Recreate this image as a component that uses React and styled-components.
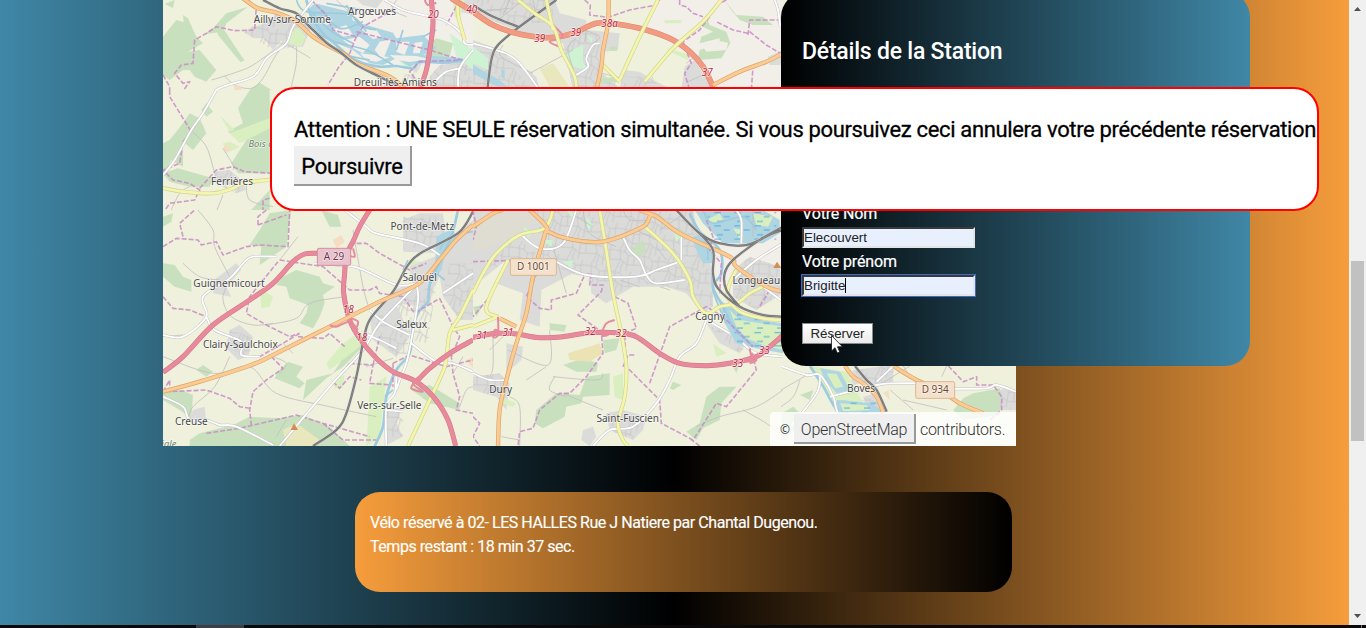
import React from "react";
import styled, { createGlobalStyle, css } from "styled-components";

const Global = createGlobalStyle`
  * { box-sizing: border-box; }
  body { margin: 0; overflow: hidden; font-family: Roboto, "Open Sans", sans-serif; }
`;

const Screen = styled.div`
  width: 1366px;
  height: 628px;
  display: grid;
  grid-template: 625px 3px / 1349px 17px;
`;

const Page = styled.main`
  position: relative;
  overflow: hidden;
  padding-left: 163px;
  background: linear-gradient(to right, #3f87a6, #000, #f69d3c);
`;

const MapRow = styled.section`
  display: flex;
  align-items: flex-start;
  height: 446px;
`;

const MapFrame = styled.div`
  display: grid;
  flex: 0 0 853px;
  height: 446px;
  overflow: hidden;
  & > * { grid-area: 1 / 1; }
`;

const MapSvg = styled.svg`
  display: block;
  background: #eff1dc;
`;

const Attribution = styled.div`
  align-self: end;
  justify-self: end;
  display: flex;
  align-items: center;
  width: 246px;
  height: 34px;
  padding-left: 10px;
  border-radius: 4px 0 0 0;
  background: rgba(255, 255, 255, 0.8);
  color: #333;
  font-size: 16px;
  font-weight: 300;
  letter-spacing: -0.3px;
  white-space: nowrap;
`;

const Copyright = styled.span`
  width: 14px;
  font: 12px "Noto Sans", sans-serif;
`;

const OsmButton = styled.button`
  width: 122px;
  height: 30px;
  margin-right: 4px;
  padding: 2px 0 0;
  border: 0 solid #999;
  border-width: 0 2px 2px 0;
  background: #efefef;
  color: #333;
  font: 300 16px Roboto, sans-serif;
  letter-spacing: -0.25px;
`;

const Details = styled.aside`
  position: relative;
  flex: 0 0 469px;
  height: 374px;
  margin: -8px 0 0 -235px;
  padding: 46px 21px 0;
  border-radius: 25px;
  background: linear-gradient(to right, #000, #3f87a6);
  color: #fff;
`;

const DetailsTitle = styled.h2`
  height: 28px;
  margin: 0 0 137px;
  font-size: 23px;
  font-weight: 500;
  line-height: 28px;
  letter-spacing: -0.22px;
  white-space: nowrap;
`;

const Field = styled.label`
  display: flex;
  flex-direction: column;
  align-items: flex-start;
  height: 48px;
  font-size: 16px;
  font-weight: 400;
  line-height: 21px;
  letter-spacing: -0.15px;
  -webkit-text-stroke: 0.2px #fff;
`;

const Input = styled.input`
  width: 173px;
  height: 21px;
  margin-top: 3px;
  padding: 1px 0;
  border: 2px inset #999;
  border-color: #8e8e8e #e4e4e4 #e4e4e4 #8e8e8e;
  border-radius: 0;
  background: #e8f0fe;
  color: #222;
  font: 13.33px "Liberation Sans", Arial, sans-serif;
  -webkit-text-stroke: 0;
  outline: ${(p) => (p.$focused ? "1px solid #3b6bc4" : "none")};
`;

const ReserveButton = styled.button`
  width: 71px;
  height: 21px;
  margin-top: 24px;
  padding: 0;
  border: 1px solid #8a8a8a;
  background: linear-gradient(#fff, #ebebeb);
  color: #222;
  font: 13.33px "Liberation Sans", Arial, sans-serif;
`;

const Caret = styled.i`
  position: absolute;
  left: 64px;
  top: 286px;
  width: 1px;
  height: 15px;
  background: #000;
`;

const Pointer = styled.svg`
  position: absolute;
  left: 50px;
  top: 343px;
`;

const Notice = styled.section`
  width: 657px;
  height: 100px;
  margin: 46px 0 0 192px;
  padding: 19px 15px;
  border-radius: 25px;
  background: linear-gradient(to right, #f69d3c, #000);
  color: #fff;
  font-size: 16px;
  line-height: 24px;
  white-space: nowrap;
`;

const NoticeLine = styled.p`
  margin: 0;
  letter-spacing: -0.45px;
  -webkit-text-stroke: 0.15px #fff;
`;

const Dialog = styled.div`
  position: absolute;
  left: 270px;
  top: 87px;
  width: 1049px;
  height: 124px;
  padding: 26px 0 0 22px;
  border: 2px solid #f00;
  border-radius: 25px;
  background: #fff;
  color: #000;
  white-space: nowrap;
`;

const DialogText = styled.p`
  margin: 0 0 1px;
  font-size: 22px;
  font-weight: 400;
  line-height: 30px;
  letter-spacing: -0.35px;
  -webkit-text-stroke: 0.3px #000;
`;

const ContinueButton = styled.button`
  display: block;
  width: 118px;
  height: 40px;
  padding: 2px 0 0;
  border: 0 solid #999;
  border-width: 0 2px 2px 0;
  background: #efefef;
  color: #000;
  font: 400 22px Roboto, sans-serif;
  letter-spacing: -0.3px;
  -webkit-text-stroke: 0.3px #000;
`;

const Scrollbar = styled.div`
  display: flex;
  flex-direction: column;
  align-items: center;
  background: #f0f0f0;
`;

const Arrow = styled.svg`
  display: block;
  margin-top: ${(p) => p.$top}px;
`;

const Thumb = styled.div`
  width: 13px;
  height: 180px;
  margin-top: 250px;
  background: #c1c1c1;
`;

const Taskbar = styled.footer`
  grid-column: 1 / -1;
  display: flex;
  padding-left: 196px;
  background: #0c090b;
`;

const TaskActive = styled.div`
  width: 48px;
  background: #403c40;
`;

const TaskDivider = styled.div`
  width: 1px;
  margin-left: 1117px;
  background: #777;
`;

const kinds = {
  land: css`fill: #f2efe9;`,
  wood: css`fill: #c8e0be;`,
  park: css`fill: #cdf3d2;`,
  grass: css`fill: #d9efbf;`,
  field: css`fill: #e9e7bd;`,
  industry: css`fill: #dfddd2;`,
  farm: css`fill: #f6dcc2;`,
  fallow: css`fill: #ebe3b4;`,
  urban: css`fill: #dbdbda;`,
  streets: css`fill: url(#streets);`,
  water: css`fill: #aed5e1;`,
  marsh: css`fill: url(#marsh);`,
  peak: css`fill: #d08f55;`,
  stream: css`stroke: #9dcbdc; stroke-width: 5;`,
  river: css`stroke: #9dcbe0; stroke-width: 8;`,
  path: css`stroke: #c1bfc0; stroke-width: 2.5;`,
  border: css`stroke: #c98bc6; stroke-width: 4.8; stroke-dasharray: 15 6; opacity: 0.85;`,
  white: css`stroke: #fff; stroke-width: 5.5;`,
  yellow: css`stroke: #f4f6b0; stroke-width: 8;`,
  orange: css`stroke: #fbcb94; stroke-width: 9;`,
  coral: css`stroke: #f19b83; stroke-width: 14;`,
  red: css`stroke: #e68a9c; stroke-width: 12;`,
  ramp: css`stroke: #e68a9c; stroke-width: 6;`,
  rail: css`stroke: #6b6b6b; stroke-width: 6;`,
};

const casings = {
  white: css`stroke: #c4c3c6; stroke-width: 8.5;`,
  yellow: css`stroke: #d3d58b; stroke-width: 12;`,
  orange: css`stroke: #e0a265; stroke-width: 13;`,
  coral: css`stroke: #e58169; stroke-width: 17;`,
  red: css`stroke: #d97086; stroke-width: 15;`,
  rail: css`stroke: #cfcfcf; stroke-width: 9;`,
};

const areas = ["land", "wood", "park", "grass", "field", "fallow", "industry", "farm", "urban", "streets", "water", "marsh", "peak"];

const Shape = styled.path`
  fill: none;
  stroke-linejoin: round;
  ${(p) => (p.$casing ? casings[p.$kind] : kinds[p.$kind])}
`;

const Place = styled.text`
  font-family: "Noto Sans", sans-serif;
  font-size: ${(p) => p.$size}px;
  font-style: ${(p) => (p.$italic ? "italic" : "normal")};
  fill: ${(p) => p.$color || "#484848"};
  stroke: rgba(255, 255, 255, 0.65);
  stroke-width: 4;
  paint-order: stroke;
  text-anchor: middle;
`;

const Shield = styled.rect`
  fill: ${(p) => (p.$motorway ? "#e8c2cd" : "#f3e1cd")};
  stroke: ${(p) => (p.$motorway ? "#d68c9f" : "#dcb68e")};
  stroke-width: 3;
`;

const tiles = [
  {
    id: "nw", x: 163, y: 0, w: 310, h: 90,
    shapes: [
      ["land", "M480 0H930V270H860L800 210 600 190 510 100 430 0Z"],
      ["wood", "M0 110L20 85 40 60 62 66 60 45 75 55 100 110 120 130 75 155 110 150 160 210 130 245 95 230 80 210 60 210 20 240 0 225ZM118 105L150 85 190 40 255 20 190 70 180 95 145 100ZM28 163L50 152 60 168 40 205 18 200ZM160 80L180 85 245 182 232 186 165 105ZM225 325L260 270 290 248 350 285V520H250L205 490 250 420 193 395 240 370Z"],
      ["wood", "M5 12L35 0 30 24ZM820 115L870 130 860 170 800 175 770 150Z"],
      ["urban", "M240 95L290 75 345 40 410 55 450 70 420 140 370 140 355 122 330 150 300 110 265 110ZM690 160L725 150 780 185 760 220 740 205ZM800 230L830 195 900 190 930 170V270H800ZM875 0H930V45L890 35ZM580 0L660 0 640 25 600 15Z"],
      ["streets", "M240 95L345 40 450 70 410 140 330 150ZM800 230L830 195 930 170V270H800ZM640 230L760 220V270H650Z"],
      ["grass", "M370 130L380 100 405 82 428 110 415 140ZM620 145L650 135 660 165 630 170ZM870 0H905L890 60 875 50Z"],
      ["park", "M690 160L740 160 770 200 730 205ZM860 100L930 150V210L880 170Z"],
      ["water", "M440 25L455 10 560 35 570 62 610 75 690 98 700 115 780 105 800 125 820 145 780 165 900 175 900 190 760 190 740 200 700 175 660 195 620 190 570 150 510 125 440 80Z"],
      ["land", "M590 83L640 90 655 110 630 118ZM650 125L685 118 660 180 635 150ZM470 55L500 48 510 68 490 75ZM510 88L550 75 570 105 540 110ZM700 125L740 125 725 165 700 155ZM755 128L780 125 770 160 750 160ZM540 120L590 110 620 135 600 160 570 145ZM590 160L640 165 680 172 640 185 610 180ZM680 165L760 168 800 178 740 186 700 180Z"],
      ["stream", "M400 0L430 35 560 45 610 95M470 25L530 85 600 65M420 65L500 120 610 150 690 195M450 90L540 160 620 180M490 10L600 30M550 15L590 75 640 90M720 90L700 150M780 110L820 90M440 30L500 90 570 130"],
      ["river", "M430 0L445 50 480 100 520 135 560 170 600 190 650 200 700 198 750 205 770 185 840 188 900 180"],
      ["path", "M145 240L210 220 270 195 360 130M185 228L215 255 265 265 300 235 330 180 360 135M385 140L410 155 442 174M400 140L400 190 385 260M88 395L130 440 155 515M80 400L60 460M520 0L600 75M700 0L690 30 730 50"],
      ["border", "M255 0L280 20 275 90 215 92 160 80 130 100 95 120 90 190 55 195 35 220 60 250 80 245 40 300 35 310M0 225L20 260 20 290 40 310 60 340 85 395M445 0L490 45 510 90 580 110 600 80 690 30 685 10M580 110L560 160 525 205 495 255M580 95L800 150 895 180 770 185 740 215 760 240M890 0L850 75"],
      ["white", "M120 340L160 270 270 230 310 175 370 130 390 80 450 0M665 0L720 30 780 45 840 60 895 100 905 130 930 135M930 150L890 205 885 270M820 240L850 215 890 205"],
      ["yellow", "M885 0L885 45 905 120"],
      ["orange", "M240 -5L285 25 340 38 400 65 450 110 500 140 540 160 580 190 680 230 730 270"],
      ["rail", "M300 0L350 25 400 40 440 80 490 128 530 155 580 195 650 230 700 255"],
      ["red", "M805 0L810 70 802 140 790 210 770 270"],
      ["coral", "M865 -5L930 35"], ["ramp", "M785 0L795 15 820 8"],
      ["farm", "M210 255L235 260 238 280 220 280Z"],
    ],
    labels: [[388, 68, "Ailly-sur-Somme"], [627, 46, "Argœuves"], [697, 257, "Dreuil-lès-Amiens"], [811, 54, "20", "road"], [926, 38, "40", "road"]],
  },
  {
    id: "west", x: 163, y: 90, w: 310, h: 120, oy: 270,
    shapes: [
      ["wood", "M260 270L320 255V520H225L205 490 250 420 193 395 240 370 225 325ZM0 430L20 420 60 370 80 340 110 355 130 400 90 450 60 425 60 500 25 480 10 520 0 515ZM0 520L45 505 150 535 140 560 80 560 20 545ZM98 365L120 375 125 390 100 375ZM130 310L150 335 130 350 115 330ZM260 635L320 570V660H265Z"],
      ["grass", "M180 430L200 425 230 440 190 460ZM200 400L330 350V380L230 430ZM170 345L190 365 215 390 200 395Z"],
      ["farm", "M185 435L205 440 195 455 180 450Z"],
      ["urban", "M155 515L200 510 235 540 250 570 220 580 205 555 150 545Z"], ["streets", "M155 515L200 510 250 560 220 580 150 545Z"],
      ["path", "M88 395L130 440 155 520M180 445L210 495 210 510M180 585L150 660M80 560L50 580 20 640M250 545L260 600 330 620"],
      ["border", "M20 270L20 290 85 395 60 425 50 490 0 510 30 540 80 550 110 570 95 600 20 610 0 640M110 565L160 510 210 500 245 515 330 520M320 595L300 600 300 640 330 650"],
      ["white", "M0 525L35 480 85 390 120 340 160 270"],
      ["yellow", "M0 564L60 575 150 580 210 565 240 550 330 538"],
    ],
    labels: [[301, 440, "Bois de", "wood"], [207, 555, "Ferrières"]],
  },
  {
    id: "north", x: 473, y: 0, w: 310, h: 90,
    shapes: [
      ["land", "M560 0H930V270H700L640 150 560 100 510 100Z"],
      ["urban", "M0 0H245L260 40 340 60 340 90 440 100 435 150 395 155 380 210 440 270H300L270 130 180 110 0 40ZM0 120L70 145 190 230 200 270H0ZM635 200L665 180 720 270H625ZM885 170L930 150V195H890ZM440 270L450 210 500 215 540 240 600 270Z"],
      ["streets", "M265 140L340 90 380 110 380 270H305ZM0 0H240V70H100ZM0 150L80 160 180 270H0ZM330 230H550V270H330Z"],
      ["park", "M278 158L330 135 330 185 345 210 300 200ZM0 140L45 175 45 210 0 190ZM340 105L360 115 355 130Z"],
      ["field", "M200 205L240 190 290 260H230Z"],
      ["wood", "M700 50L710 75 760 95 772 130 745 175 675 180 680 150 740 130 740 115 680 130 685 110 720 95 680 75ZM755 0L790 45 870 50 900 75 840 75 800 60 775 30ZM380 235L440 230 440 245 380 250ZM410 140H432V152H410Z"],
      ["land", "M690 140L735 122 765 128 760 150 700 155Z"],
      ["grass", "M580 145L650 165 645 180 590 155ZM575 60H625V70H575Z"],
      ["water", "M0 195L70 235 120 270H90L0 220ZM85 205L95 210 95 240 85 230Z"],
      ["path", "M170 220L300 150M90 135L85 170 180 220M180 0L190 50M70 65L150 0M110 0L90 45M10 35L110 25M300 100L330 90 380 110 360 130M310 115L285 145 300 205M340 90L335 125M440 235L390 220M645 245L690 225M640 190L660 175"],
      ["border", "M335 0L352 15 350 45 405 52 470 30 550 15 560 0M620 0L620 15 640 20 660 40 690 50M710 50L680 90 630 125 645 165 655 190 635 220 650 270M760 0L740 10M825 105L830 60 920 60M825 100L780 90 730 65M830 95L880 135 930 165 840 200 835 270"],
      ["white", "M0 130L70 150 130 180 200 270M380 130L360 135 340 175 345 200 310 225M905 0L915 30 922 80"],
      ["rail", "M250 0L140 80 75 135 55 180 43 270M0 15L60 50 135 80"],
      ["coral", "M0 35L60 75 130 100 200 112 245 112 300 100 370 70 430 72 520 90 600 120 650 155 690 200 720 260"],
      ["ramp", "M240 75L270 110 230 125 260 140"],
      ["yellow", "M135 0L185 40 240 80 265 150 305 230 310 270M220 0L240 90M555 0L500 110 440 240M745 0L690 65 600 145 515 245M390 195L440 245"],
      ["orange", "M407 0L405 70 390 150 385 200 370 270M930 160L880 185 800 215 720 255"],
    ],
    labels: [[200, 125, "39", "road"], [308, 107, "39", "road"], [410, 82, "38a", "road"], [703, 228, "37", "road"]],
  },
  {
    id: "southwest", x: 163, y: 210, w: 310, h: 236,
    shapes: [
      ["wood", "M290 60L320 10 385 0 370 110 290 165 295 110 260 105ZM360 200L400 180 470 200 480 220 515 230 480 255 485 280 470 320 450 355 410 340 430 310 435 285 380 265 370 230 340 225ZM345 485L375 455 420 470 400 500 425 520 410 535 335 505ZM100 480L120 465 150 485 130 500ZM0 160L35 165 60 200 85 210 85 245 35 230 0 200ZM0 545L55 540 90 555 85 625 50 600 0 570ZM80 690L110 670 210 645 260 620 350 625 420 615 500 650 560 708H80ZM430 510L510 490 590 370 600 410 540 470 490 505 420 570ZM475 0L525 15 535 50 500 50ZM740 535L800 525 890 580 890 600 800 580ZM0 20L30 10 25 35 0 50Z"],
      ["field", "M360 660L400 640 470 690 450 708H370Z"],
      ["grass", "M540 400L600 360 590 410 500 480 490 460ZM290 235L330 260 320 290 295 295ZM740 150L800 160 780 190 740 195ZM620 530L670 500 650 680 610 708ZM510 510L545 495 540 530 515 535Z"],
      ["urban", "M720 30L770 10 840 10 850 90 930 30V330H890L840 260 830 200 800 260 780 290 700 280 740 380 700 440 630 390 620 320 690 240 750 220 740 170 840 130 720 125ZM160 205L220 160 235 180 190 230 205 260 150 250ZM200 360L230 345 270 380 255 440 225 450 190 415ZM90 600L125 590 130 640 80 630ZM670 600L720 590 700 640 720 680 665 708Z"],
      ["streets", "M720 20L840 20 850 90 720 120ZM840 260L860 160 930 160V320L890 330ZM700 280L820 220 795 400 740 390ZM630 360L700 440 740 430 730 360 650 310ZM200 360L270 380 255 440 190 410ZM670 600H720V680H670Z"],
      ["farm", "M510 90L535 75 545 95 520 115ZM910 450L930 440V475Z"],
      ["water", "M820 80L870 55 880 85 850 110 835 180 815 210Z"],
      ["river", "M885 0L865 80 830 155 800 225 795 275 770 300 750 350 740 430 700 480 670 560 660 650 635 708"],
      ["stream", "M830 120L860 80 930 65M820 190L845 210M690 540L665 560M720 180L735 150"],
      ["path", "M105 0L150 60 155 110 200 200M60 160L110 200 170 210M190 230L180 270 205 320 270 345 330 340M0 380L60 375M350 150L405 80M360 400L390 430M545 260L440 280 400 325 310 345M330 440L370 460 350 490M0 440L150 490 260 470 340 550 500 590 640 620M200 440L155 530 90 590 75 630M570 60L600 230 620 300M890 590L910 540 930 530M610 470L690 445M370 630L340 680M870 490L900 440"],
      ["border", "M0 110L40 85 105 90 115 105 160 95 180 135 250 110 290 105 375 110 380 0M60 80L50 40 95 0M285 45L370 15M285 45V20L310 0M0 260L30 295 80 300 130 320M345 155L260 260 250 310 310 345 380 380 410 370M170 330L260 270M350 150L480 170 560 240 620 240 640 230 650 250 720 260M560 100L610 100 650 130 740 180 790 160M410 370L360 400 290 440M405 380L480 385 500 370 545 410M325 440L360 475 310 510 270 545 260 600 265 645M0 545L20 510 20 545 130 540 200 565 230 590 260 595M130 670L230 655 400 615 480 640 620 680M480 640L540 690 640 690M560 460L630 465 620 520 685 525M510 520L560 460M510 515L530 535 560 500 595 510M630 465L650 380M690 460L740 435 850 470 930 450M690 460L690 530M830 265L870 350 890 380 865 440 870 490 890 560 880 600 930 610M720 260L755 310 830 265"],
      ["white", "M0 375L60 380 130 320 120 260 200 205 245 155 270 140 340 140M130 320L155 360 235 395 235 435 290 440M455 160L520 165 590 175 700 225 760 220M545 0L610 50 640 70 770 100 830 135M620 300L660 335 740 375M760 220L765 270 745 390 730 460 710 510 700 540M765 220L650 340 600 420 500 530 350 708M0 560L60 590 80 630 130 630 170 645 220 650 330 705M605 370L650 390 700 415M745 400L820 455 870 460 930 485M930 190L840 250M700 500L695 550 670 590 670 708M670 600L720 605"],
      ["yellow", "M930 240L890 320 860 370 845 470 800 570 735 708M870 360L930 345"],
      ["rail", "M930 5L885 70 780 125 735 165 690 245 620 330 600 400 580 500 550 610 520 660 450 708"],
      ["red", "M0 487L60 440 150 345 260 270 330 220 390 155 425 132 465 130M620 0L590 50 570 95 550 135 545 190 542 250 560 330 590 385 640 445 690 485 760 515 815 565 855 630 878 708M930 390L860 430 800 475 765 510"],
      ["orange", "M0 545L110 515 265 465 340 430 500 350 650 275 765 222 830 150 880 90 930 45"],
      ["ramp", "M570 115L575 140 555 135M500 345L520 350 560 335 585 360M565 325L585 335 580 355M760 510L745 535 780 545 750 520 775 495"],
      ["peak", "M393 640L405 660H383Z"],
    ],
    labels: [[198, 231, "Guignemicourt"], [232, 414, "Clairy-Saulchoix"], [85, 646, "Creuse"], [778, 59, "Pont-de-Metz"], [770, 213, "Salouël"], [746, 354, "Saleux"], [679, 596, "Vers-sur-Selle"], [10, 711, "Aigle", "wood"], [556, 308, "18", "road"], [596, 393, "18", "road"]],
    shields: [[463, 115, 100, 51, "A 29", true]],
  },
  {
    id: "south", x: 473, y: 210, w: 310, h: 236,
    shapes: [
      ["urban", "M0 0H660L680 90 720 180 720 290 690 310 640 250 580 230 480 230 430 260 400 280 355 250 350 190 300 190 205 240 200 350 140 330 150 250 70 220 100 150 0 230Z"],
      ["streets", "M190 0H660L680 90 720 180 720 290 640 240 500 220 430 250 360 220 210 150ZM50 160L130 80 190 130V170H50Z"],
      ["industry", "M0 40L90 0 165 5 190 35 100 90 0 130Z"],
      ["land", "M720 0H800L930 70V180L850 260 800 280 740 230 715 160Z"],
      ["urban", "M780 180L830 140 920 170 930 250 850 300 780 260ZM0 500L80 490 110 520 100 600 70 560 0 540ZM100 400L150 410 145 450 100 490ZM400 610L450 600 520 620 510 660 480 690 410 660ZM330 660L360 650 370 680 350 708 325 690ZM700 340L750 360 820 400 800 430 740 400Z"],
      ["streets", "M780 180L830 140 920 170V250L850 300 780 260ZM0 500L80 490 100 520 70 560 0 540ZM400 610L510 620 480 690 410 660ZM710 350L750 360 820 410 800 430Z"],
      ["wood", "M390 390L440 385 430 420 395 430ZM270 465L330 445 375 460 370 485 310 485ZM230 340L280 345 275 365 230 360ZM340 500L410 490 410 555 330 560 325 580 280 590 275 620 210 655 185 640 190 600 250 550 320 555ZM700 560L740 530 790 530 745 580 740 630 690 655 670 690 640 665 680 640ZM0 290L30 285 10 320ZM590 535L600 515 625 525 600 540ZM780 470L800 460 790 490ZM600 50L640 70 620 90ZM470 120L510 90 520 120 490 150Z"],
      ["park", "M150 50L180 65 165 85ZM205 90L240 90 235 110ZM270 155L300 150 295 175ZM600 60L625 80 610 95ZM280 0L310 10 300 30ZM340 20L360 45 345 60Z"],
      ["fallow", "M285 430L380 400 390 430 350 455 290 450Z"],
      ["grass", "M90 565L130 580 120 590 85 580ZM420 500L450 490 450 570 425 560ZM720 400L760 430 730 440Z"],
      ["water", "M660 80L690 70 715 95 720 160 690 160 665 110ZM665 0H870L920 30V70L870 100 750 100 690 40ZM740 270L770 290 860 330 930 340V430L850 415 790 400 755 340Z"],
      ["grass", "M700 30L740 10 750 30 720 40ZM780 55L810 60 800 85ZM840 10L900 20 885 50 850 45ZM770 300L800 330 900 345 930 350V420L870 405 820 385 790 350Z"],
      ["marsh", "M700 0H910V90H720ZM770 290L930 340V430L790 400Z"],
      ["river", "M650 10L680 65 740 120 745 190 720 230 750 290 780 350 840 410"],
      ["stream", "M670 60L700 100 705 150M720 150V240L760 340M690 0L720 40 810 20 850 60"],
      ["path", "M60 380V470L50 500M100 370L50 420M230 360L225 465 105 420M240 500L370 510 390 490M270 550L390 600M245 500L230 540 280 560M110 560L140 590 140 708M85 680L140 690M160 510L220 470M560 230L590 240M930 540L850 590 740 620 670 650M810 600L880 640 930 680M380 360L490 370M240 110L280 250M330 0L350 70 430 110M310 20L360 50M490 60L550 90M450 0L470 30 520 30M620 20L560 60M550 110L580 150M440 210L500 230M840 0V80"],
      ["border", "M0 155L160 150 210 150 160 260 200 295 235 300 235 270 310 250 335 195 355 190 350 225 390 225 385 245 315 315 385 365 390 430 340 500 290 550 260 550 200 600 180 655 140 665 135 708M425 260L465 280 490 355 455 370 460 470 530 540 560 570 565 640 660 690 680 660 730 580 760 590 850 480 840 440M530 520L590 350 700 290 750 320 840 410M100 155L50 260 0 320M160 150L180 200M0 0L10 50 0 90M450 470L465 435 490 435M0 620L20 640 0 680 20 708M700 30L720 80 710 120 745 160 740 250M890 240L860 290M680 708L650 685"],
      ["white", "M145 75L200 115 270 100 310 0M240 150L340 195 490 200 550 180 620 155M450 80L470 120 500 150 520 195 550 220 635 210M625 80V150M0 490L50 510 100 510M700 330L670 400 620 440 590 510 550 580 480 650 410 660 360 708M710 335L770 370M790 0L805 30 805 100M780 210L850 150 930 100M870 230L930 275M810 400L850 430 930 440"],
      ["yellow", "M240 0L215 55 140 75 70 130 30 190 0 250M105 150L40 290 75 320M75 320L0 350M515 50L600 130 650 210 660 260 700 310 740 290 790 280 830 250 870 230M790 180L770 220 765 260 800 305 870 325 930 330"],
      ["red", "M0 382L70 370 130 372 200 383 270 380 350 368 430 368 490 380 560 430 620 460 700 467 770 460 850 440 890 410 930 375"],
      ["yellow", "M380 0L395 90 420 250 445 370 460 470 455 560 435 640 450 690 465 708"],
      ["orange", "M170 0L220 50 215 75 180 200 160 310 130 400 100 510 80 600 75 708M0 50L60 10 90 0M215 60L280 85 390 95 510 50 540 15 620 70 770 140 790 170 880 230 930 245M500 0L540 15M80 325L130 350"],
      ["rail", "M610 0L680 70 740 100 820 105 900 70 930 60M680 70L720 120 720 190 735 235 800 290 870 315 930 320M930 50L860 90 780 150 755 190 760 240 800 290"],
      ["ramp", "M75 320V375L60 380 65 360 80 365M385 370L400 340 425 330M385 360L405 375 385 378M830 415L835 450 820 455M835 430L850 450 830 460"],
      ["peak", "M912 155L925 174H901Z"],
    ],
    labels: [[83, 548, "Dury"], [464, 637, "Saint-Fuscien"], [711, 331, "Cagny"], [850, 222, "Longueau"], [26, 387, "31", "road"], [105, 379, "31", "road"], [352, 375, "32", "road"], [445, 380, "32", "road"], [794, 470, "33", "road"], [874, 432, "33", "road"]],
    shields: [[112, 146, 138, 50, "D 1001"]],
  },
  {
    id: "southeast", x: 781, y: 366, w: 235, h: 80, ox: 63, oy: 468,
    shapes: [
      ["urban", "M280 480L400 465 400 520 350 530 310 515 270 530ZM310 560L345 550 380 600H320ZM700 550L740 530 768 545V600H710Z"], ["streets", "M280 480L400 465V520L350 530 310 515ZM310 550L380 600H320ZM700 550L768 540V600H710Z"],
      ["wood", "M610 565L640 550 720 535 720 615 610 630 580 600ZM65 610L100 590 130 620 80 690 63 690ZM120 555L160 540 150 570Z"],
      ["grass", "M150 468L260 485 320 600 230 600 190 530Z"],
      ["water", "M180 475L240 485 270 540 230 550 195 510ZM230 570L340 580 370 610H230Z"],
      ["grass", "M200 490L230 492 250 530 225 535ZM240 580L320 586 330 600 250 604Z"], ["marsh", "M220 570H350V610H220Z"],
      ["farm", "M370 550L385 540 390 570Z"],
      ["river", "M150 468L190 530 230 600 280 650 370 650"],
      ["path", "M63 540L150 490M63 590L100 560 120 510M450 500L430 468M390 540L460 600M350 530L430 480 450 468M545 500L560 468M430 570L560 600"],
      ["border", "M565 468L610 515 650 500 650 525 700 525 725 560 725 600 690 630"],
      ["white", "M63 468L140 495 180 495 220 560 230 600 260 650M180 500L170 550 100 640 63 680M210 560L350 525 400 520 470 520M350 515L400 468M580 537L680 535 710 525 768 545"],
      ["orange", "M255 468L280 500 310 520 350 560 370 610M400 468L470 510 540 540 600 580 670 610"],
      ["rail", "M285 468L320 510 350 540 380 605"],
    ],
    labels: [[303, 545, "Boves"]],
    shields: [[467, 515, 117, 50, "D 934"]],
  },
];

const roadKinds = ["white", "yellow", "rail", "orange", "coral", "red"];

// Turns the straight segments of an open line into a Catmull-Rom curve.
function smooth(d) {
  return d
    .split("M")
    .filter(Boolean)
    .map((part) => {
      const pts = [];
      (part.match(/[LHV]?[^LHV]+/g) || []).forEach((seg) => {
        const nums = (seg.match(/-?[\d.]+/g) || []).map(Number);
        const last = pts[pts.length - 1];
        if (seg[0] === "H") pts.push([nums[0], last[1]]);
        else if (seg[0] === "V") pts.push([last[0], nums[0]]);
        else for (let i = 0; i + 1 < nums.length; i += 2) pts.push([nums[i], nums[i + 1]]);
      });
      let out = `M${pts[0]}`;
      for (let i = 0; i < pts.length - 1; i++) {
        const a = pts[i - 1] || pts[i];
        const b = pts[i];
        const c = pts[i + 1];
        const e = pts[i + 2] || c;
        out += `C${b[0] + (c[0] - a[0]) / 6} ${b[1] + (c[1] - a[1]) / 6} ${c[0] - (e[0] - b[0]) / 6} ${c[1] - (e[1] - b[1]) / 6} ${c[0]} ${c[1]}`;
      }
      return out;
    })
    .join("");
}

function MapTile({ tile }) {
  const ox = tile.ox || 0;
  const oy = tile.oy || 0;
  return (
    <svg x={tile.x - 163} y={tile.y} width={tile.w} height={tile.h} viewBox={`${ox} ${oy} ${tile.w * 3} ${tile.h * 3}`}>
      {tile.shapes.map(([kind, line], i) => {
        const d = areas.includes(kind) || kind === "border" ? line : smooth(line);
        return (
          <React.Fragment key={i}>
            {roadKinds.includes(kind) && <Shape $kind={kind} $casing d={d} />}
            <Shape $kind={kind} d={d} />
            {kind === "rail" && <path d={d} fill="none" stroke="#aaa" strokeWidth="1.5" />}
          </React.Fragment>
        );
      })}
      {(tile.shields || []).map(([x, y, w, h, text, motorway]) => (
        <g key={text}>
          <Shield x={x} y={y} width={w} height={h} rx="5" $motorway={motorway} />
          <Place x={x + w / 2} y={y + 35} $size={30} $color={motorway ? "#6b3545" : "#6b4c2e"}>{text}</Place>
        </g>
      ))}
    </svg>
  );
}

const labelStyles = {
  town: { size: 30.3 },
  road: { size: 30, color: "#bb2b3f", italic: true },
  wood: { size: 28, color: "#6f8265", italic: true },
};

function MapLabels({ tile }) {
  const ox = tile.ox || 0;
  const oy = tile.oy || 0;
  return (
    <g transform={`translate(${tile.x - 163 - ox / 3} ${tile.y - oy / 3}) scale(0.33333)`}>
      {tile.labels.map(([x, y, text, type = "town"], i) => {
        const s = labelStyles[type];
        return <Place key={i} x={x} y={y} $italic={s.italic} $size={s.size} $color={s.color}>{text}</Place>;
      })}
    </g>
  );
}

function StationMap() {
  return (
    <MapSvg width="853" height="446" viewBox="0 0 853 446">
      <defs>
        <pattern id="streets" width="74" height="66" patternUnits="userSpaceOnUse" patternTransform="rotate(14)">
          <path d="M0 12H30L42 20 74 12M0 42L22 36 45 48 74 42M14 0V12L22 36 16 66M42 20L45 66M60 0L58 17 64 44M28 12L30 0M30 40L28 66" stroke="#c8c8c8" strokeWidth="2.6" fill="none" />
        </pattern>
        <pattern id="marsh" width="60" height="40" patternUnits="userSpaceOnUse">
          <path d="M4 8H24M32 20H50M12 34H30" stroke="#4ea5e0" strokeWidth="3" />
        </pattern>
      </defs>
      {tiles.map((t) => <MapTile key={t.id} tile={t} />)}
      {tiles.map((t) => <MapLabels key={t.id} tile={t} />)}
    </MapSvg>
  );
}

export default function App() {
  return (
    <Screen>
      <Global />
      <Page>
        <MapRow>
          <MapFrame>
            <StationMap />
            <Attribution>
              <Copyright>©</Copyright>
              <OsmButton>OpenStreetMap</OsmButton>
              contributors.
            </Attribution>
          </MapFrame>
          <Details>
            <DetailsTitle>Détails de la Station</DetailsTitle>
            <Field>Votre Nom<Input defaultValue="Elecouvert" /></Field>
            <Field>Votre prénom<Input $focused defaultValue="Brigitte" /></Field>
            <ReserveButton>Réserver</ReserveButton>
            <Caret />
            <Pointer width="12" height="19" viewBox="0 0 12 19">
              <path d="M.5.5V16L4 12.7 6.3 18 8.8 17 6.5 11.8H11.5Z" fill="#fff" stroke="#111" strokeWidth=".8" />
            </Pointer>
          </Details>
        </MapRow>
        <Notice>
          <NoticeLine>Vélo réservé à 02- LES HALLES Rue J Natiere par Chantal Dugenou.</NoticeLine>
          <NoticeLine>Temps restant : 18 min 37 sec.</NoticeLine>
        </Notice>
        <Dialog>
          <DialogText>Attention : UNE SEULE réservation simultanée. Si vous poursuivez ceci annulera votre précédente réservation</DialogText>
          <ContinueButton>Poursuivre</ContinueButton>
        </Dialog>
      </Page>
      <Scrollbar>
        <Arrow $top={7} width="7" height="4" viewBox="0 0 7 4"><path d="M0 4L3.5 0 7 4Z" fill="#505050" /></Arrow>
        <Thumb />
        <Arrow $top={173} width="7" height="4" viewBox="0 0 7 4"><path d="M0 0H7L3.5 4Z" fill="#505050" /></Arrow>
      </Scrollbar>
      <Taskbar><TaskActive /><TaskDivider /></Taskbar>
    </Screen>
  );
}
